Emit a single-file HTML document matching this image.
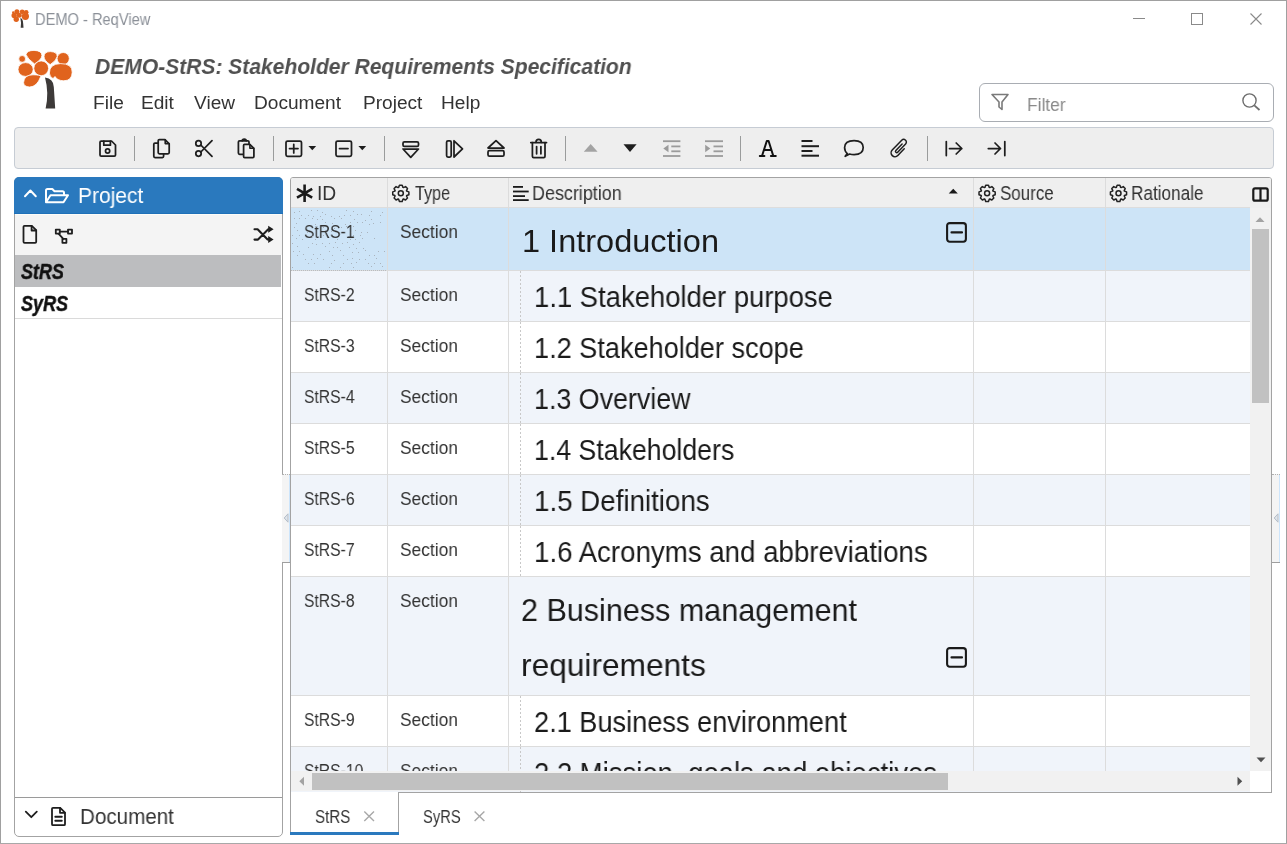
<!DOCTYPE html>
<html><head><meta charset="utf-8">
<style>
*{box-sizing:border-box;margin:0;padding:0}
html,body{width:1287px;height:844px;overflow:hidden;background:#fff;font-family:"Liberation Sans",sans-serif;color:#222}
.a{position:absolute}
.t{position:absolute;white-space:nowrap;line-height:1;transform-origin:0 0;will-change:transform}
svg{position:absolute;overflow:visible}
.ln{position:absolute;background:#dcdcdc}
</style></head><body>
<!-- window frame -->
<div class="a" style="left:0;top:0;width:1287px;height:1px;background:#a0a0a0"></div>
<div class="a" style="left:0;top:0;width:1px;height:844px;background:#a0a0a0"></div>
<div class="a" style="left:1286px;top:0;width:1px;height:844px;background:#a0a0a0"></div>
<div class="a" style="left:0;top:843px;width:1287px;height:1px;background:#a8a8a8"></div>

<!-- TITLEBAR -->
<svg style="left:10px;top:8px" width="22" height="22" viewBox="0 0 70 70">
 <g fill="#e0631d">
  <circle cx="10.4" cy="14.1" r="4"/><circle cx="22" cy="11.6" r="8"/><circle cx="38.6" cy="12" r="7.5"/><circle cx="51.4" cy="13.7" r="7.5"/>
  <circle cx="13.3" cy="24" r="8.5"/><circle cx="29.4" cy="23.2" r="8"/><circle cx="48.9" cy="26.5" r="11.5"/><circle cx="19.9" cy="35.7" r="8.5"/>
 </g>
 <path d="M33 32 Q41 33 42 50 L43 63 L34 63 Q37 50 33 32Z" fill="#3b3938"/>
</svg>
<div class="t" style="left:35px;top:11.6px;font-size:15.8px;color:#8b9098;transform:scaleX(.927)">DEMO - ReqView</div>
<div class="a" style="left:1133px;top:18px;width:12px;height:1px;background:#8a8a8a"></div>
<div class="a" style="left:1191px;top:13px;width:12px;height:12px;border:1px solid #8a8a8a"></div>
<svg style="left:1250px;top:13px" width="12" height="12" viewBox="0 0 12 12"><path d="M0.5 0.5L11.5 11.5M11.5 0.5L0.5 11.5" stroke="#8a8a8a" stroke-width="1.1"/></svg>

<!-- APP HEADER -->
<svg style="left:12px;top:45px" width="70" height="70" viewBox="0 0 70 70">
 <path d="M33 32.5 Q41.5 33.5 41.8 42 L43.2 63.5 L33.6 63.5 Q37.2 48 33 32.5Z" fill="#3d3a39"/>
 <g fill="#e0631d" stroke="#fff" stroke-width="0.8">
  <circle cx="10.15" cy="13.9" r="3.4"/>
  <path d="M14 9.5Q15 5.4 22 5.4Q29.9 5.6 29.9 10.5Q29.5 15 22.5 18.9Q15.5 14 14 9.5Z"/>
  <path d="M32 11.5Q32.2 6.6 38.5 6.6Q45.2 6.8 45.2 11.5Q44.5 15.5 38.2 19.6Q32 15.5 32 11.5Z"/>
  <circle cx="51.2" cy="13.6" r="6.1"/>
  <ellipse cx="13.6" cy="24.5" rx="7.6" ry="6.9"/>
  <circle cx="29.2" cy="23.3" r="7.4"/>
  <path d="M37.4 28Q37.4 19 48.5 18.6Q60.2 18.6 60.2 27.2Q60.1 35.8 51.5 35.8Q45 35.4 43 31.5L41 33.6Q37.4 31.5 37.4 28Z"/>
  <path d="M11.6 37.5Q12 29.9 21 29.8Q28.7 29.8 28.7 31.5Q25 42 17.5 42Q11.5 41.6 11.6 37.5Z"/>
 </g>
</svg>
<div class="t" style="left:94.5px;top:55px;font-size:22.8px;font-weight:bold;font-style:italic;color:#505050;transform:scaleX(.923)">DEMO-StRS: Stakeholder Requirements Specification</div>
<div class="t" style="left:92.5px;top:92.8px;font-size:19.1px;color:#333">File</div>
<div class="t" style="left:141px;top:92.8px;font-size:19.1px;color:#333">Edit</div>
<div class="t" style="left:194px;top:92.8px;font-size:19.1px;color:#333">View</div>
<div class="t" style="left:254px;top:92.8px;font-size:19.1px;color:#333">Document</div>
<div class="t" style="left:362.7px;top:92.8px;font-size:19.1px;color:#333">Project</div>
<div class="t" style="left:441.4px;top:92.8px;font-size:19.1px;color:#333">Help</div>

<!-- FILTER -->
<div class="a" style="left:979px;top:83px;width:295px;height:39px;border:1px solid #a9adb3;border-radius:6px;background:#fff"></div>
<svg style="left:991px;top:93px" width="18" height="18" viewBox="0 0 18 18"><path d="M1 1.5H17L11 9V16.5L8 14V9Z" fill="none" stroke="#7a7a7a" stroke-width="1.6" stroke-linejoin="round"/></svg>
<div class="t" style="left:1026.8px;top:95.5px;font-size:18.8px;color:#8a8a8a;transform:scaleX(.925)">Filter</div>
<svg style="left:1240px;top:91px" width="22" height="22" viewBox="0 0 22 22"><circle cx="9.5" cy="9.5" r="6.6" fill="none" stroke="#6e6e6e" stroke-width="1.4"/><path d="M14.3 14.3L19.5 19" stroke="#6e6e6e" stroke-width="1.8"/></svg>

<!-- TOOLBAR -->
<div class="a" style="left:14px;top:127px;width:1260px;height:42px;background:#eeeeee;border:1px solid #c6ccd4;border-radius:4px"></div>
<div class="a" style="left:134px;top:136px;width:1px;height:25px;background:#9a9c9c"></div>
<div class="a" style="left:273px;top:136px;width:1px;height:25px;background:#9a9c9c"></div>
<div class="a" style="left:384px;top:136px;width:1px;height:25px;background:#9a9c9c"></div>
<div class="a" style="left:565px;top:136px;width:1px;height:25px;background:#9a9c9c"></div>
<div class="a" style="left:740px;top:136px;width:1px;height:25px;background:#9a9c9c"></div>
<div class="a" style="left:927px;top:136px;width:1px;height:25px;background:#9a9c9c"></div>
<svg style="left:0;top:0" width="1287" height="844" viewBox="0 0 1287 844">
<g fill="none" stroke="#1e1e1e" stroke-width="1.75" stroke-linejoin="round" stroke-linecap="round">
 <!-- save -->
 <path d="M100 142.2Q100 141 101.2 141H111.5L115.5 145V155Q115.5 156.2 114.3 156.2H101.2Q100 156.2 100 155Z"/>
 <path d="M103.8 141.2V145.2H110.4V141.2"/>
 <circle cx="107.6" cy="151" r="2.1"/>
 <!-- copy -->
 <path d="M157.8 143H155Q153.8 143 153.8 144.2V156.3Q153.8 157.5 155 157.5H162.4Q163.6 157.5 163.6 156.3V154.2"/>
 <path d="M158.2 140.7Q158.2 139.6 159.3 139.6H165L169.2 143.8V152.6Q169.2 153.8 168 153.8H159.4Q158.2 153.8 158.2 152.6Z"/>
 <path d="M165.2 139.8V143.6H169" stroke-width="1.6"/>
 <!-- scissors -->
 <circle cx="198.5" cy="143.4" r="2.7"/>
 <circle cx="198.5" cy="153.6" r="2.7"/>
 <path d="M200.8 145L212 156.3M200.8 152L212 140.7"/>
 <!-- paste -->
 <path d="M242.8 154.3H239.6Q238.4 154.3 238.4 153.1V141.9Q238.4 140.8 239.6 140.8H247.8Q249 140.8 249 141.9V144"/>
 <path d="M242.2 140.8Q242.2 139 244.3 139Q246.2 139 246.2 140.8"/>
 <path d="M243.6 145.3Q243.6 144.3 244.6 144.3H249.8L253.9 148.4V156.4Q253.9 157.5 252.8 157.5H244.7Q243.6 157.5 243.6 156.4Z"/>
 <path d="M249.9 144.5V148.3H253.7" stroke-width="1.6"/>
 <!-- plus box -->
 <rect x="286" y="141" width="15.5" height="15.3" rx="1.6"/>
 <path d="M289.5 148.6H298M293.75 144.4V152.9"/>
 <!-- minus box -->
 <rect x="336" y="141" width="15.5" height="15.3" rx="1.6"/>
 <path d="M339.5 148.6H348"/>
 <!-- insert below -->
 <rect x="403" y="141.8" width="15.5" height="4.6" rx="1.4"/>
 <path d="M403 149H418.5L410.75 157.3Z"/>
 <!-- insert child -->
 <rect x="446.6" y="140.8" width="4.6" height="16.2" rx="1.4"/>
 <path d="M454 140.8V157L462.5 148.9Z"/>
 <!-- insert above -->
 <path d="M488 148H504L496 140.6Z"/>
 <rect x="488" y="150.6" width="16" height="5.6" rx="1.4"/>
 <!-- trash -->
 <path d="M530.8 142.5H546.5"/>
 <path d="M536 142.3Q536 139.4 538.7 139.4Q541.3 139.4 541.3 142.3"/>
 <path d="M532.4 142.5V156.2Q532.4 157.5 533.7 157.5H543.7Q545 157.5 545 156.2V142.5"/>
 <path d="M536.6 146.5V153.8M540.9 146.5V153.8"/>
 <!-- comment -->
 <path d="M847.3 153.6Q844.6 151.4 844.6 147.6Q844.6 140.6 854.1 140.6Q863.2 140.6 863.2 147.6Q863.2 154.7 854.1 154.7Q851.6 154.7 849.6 154L845.2 156.3Z" stroke-width="1.7"/>
 <!-- paperclip -->
 <g transform="translate(899.35,148.3) rotate(44)"><path d="M3.9 -3V6.25A3.9 3.9 0 0 1 -3.9 6.25V-7.45A2.7 2.7 0 0 1 1.5 -7.45V4A1.25 1.25 0 0 1 -1 4V-5" stroke-width="1.5"/></g>
 <!-- arrows -->
 <path d="M946.3 141.5V155.5M949.5 148.5H961.8M956.2 143L961.8 148.5L956.2 154"/>
 <path d="M1004.8 141.5V155.5M988.3 148.5H1000.5M995 143L1000.5 148.5L995 154"/>
</g>
<g fill="#1e1e1e">
 <path d="M308.4 146H316.2L312.3 150.2Z"/>
 <path d="M358.4 146H366.2L362.3 150.2Z"/>
 <path d="M623.5 144.2H636.6L630 152Z"/>
</g>
<path d="M583.8 151.7H597.6L590.7 144Z" fill="#a3a3a3"/>
<g fill="#9b9b9b">
 <rect x="663" y="140.3" width="17.4" height="1.8"/><rect x="671.3" y="145.5" width="9.1" height="1.8"/><rect x="671.3" y="150.4" width="9.1" height="1.8"/><rect x="663" y="155.1" width="17.4" height="1.8"/>
 <path d="M663.3 148.5L668.5 144.8V152.2Z"/>
 <rect x="705" y="140.3" width="18" height="1.8"/><rect x="713.5" y="145.5" width="9.5" height="1.8"/><rect x="713.5" y="150.4" width="9.5" height="1.8"/><rect x="705" y="155.1" width="18" height="1.8"/>
 <path d="M710.3 148.5L705.2 144.8V152.2Z"/>
</g>
<g fill="#1e1e1e">
 <rect x="801.5" y="140" width="11" height="2"/><rect x="801.5" y="145.2" width="17.5" height="2"/><rect x="801.5" y="150" width="11" height="2"/><rect x="801.5" y="154.7" width="17.5" height="2"/>
</g>
</svg>
<svg style="left:0;top:0" width="1287" height="844" viewBox="0 0 1287 844"><g fill="none" stroke="#111" stroke-width="2" stroke-linecap="round" stroke-linejoin="round"><path d="M762 156L766.8 141H768.6L773.3 156M764.8 149.9H770.6M759.8 156.1H764.4M770.9 156.1H775.8"/></g></svg>


<!-- LEFT PANEL -->
<div class="a" style="left:14px;top:177px;width:269px;height:660px;border:1px solid #a3a3a3;border-radius:5px;background:#fff;overflow:hidden">
  <div class="a" style="left:-1px;top:36px;width:268px;height:41px;background:#f4f4f4;border-top:1px solid #fcfcf8"></div>
  <div class="a" style="left:-1px;top:77px;width:267px;height:32px;background:#bcbdbf"></div>
  <div class="a" style="left:-1px;top:140px;width:268px;height:1px;background:#dadada"></div>
  <div class="a" style="left:-1px;top:619px;width:268px;height:1px;background:#9a9a9a"></div>
</div>
<div class="a" style="left:14px;top:177px;width:269px;height:37px;background:#2a79be;border-bottom:1px solid #1f70b8;border-radius:5px 5px 0 0"></div>
<svg style="left:0;top:0" width="1287" height="844" viewBox="0 0 1287 844">
 <g fill="none" stroke="#fff" stroke-width="2" stroke-linecap="round" stroke-linejoin="round">
  <path d="M25 196.3L30.4 190.5L35.8 196.3"/>
  <path d="M46 201.5V190.5Q46 189 47.5 189H52.3L54.5 191.3H62.5Q64 191.3 64 192.8V195"/>
  <path d="M46 202.2L50.5 195.3H68L63.5 202.2Z"/>
 </g>
 <g fill="none" stroke="#1e1e1e" stroke-width="1.8" stroke-linejoin="round" stroke-linecap="round">
  <path d="M23.5 226.8Q23.5 225.8 24.5 225.8H31.8L36.2 230.2V241.8Q36.2 242.9 35.1 242.9H24.6Q23.5 242.9 23.5 241.8Z"/>
  <path d="M31.6 226V230.5H36"/>
  <rect x="55.8" y="229.6" width="4" height="4"/>
  <rect x="68" y="229.6" width="4" height="4"/>
  <rect x="62.4" y="238.8" width="4" height="4"/>
  <path d="M59.8 231.6H68M58.5 233.6L63.3 238.8"/>
  <path d="M254.5 229.3H257.6L267.6 239.4H269.5M254.5 239.6H258L268 229.4H269.5" stroke-width="2.1"/>
  <path d="M253.5 251 M25.8 811.7L31.3 817.2L36.8 811.7"/>
  <path d="M52 808.8Q52 807.8 53 807.8H60.2L65 812.6V824.2Q65 825.2 64 825.2H53Q52 825.2 52 824.2Z"/>
  <path d="M60 808V812.8H64.8"/>
  <path d="M55.3 816.7H61.8M55.3 820.7H61.8" stroke-width="1.9"/>
 </g>
 <g fill="#1e1e1e">
  <path d="M268.2 225.8L273.6 229.3L268.2 232.8Z"/>
  <path d="M268.2 236L273.6 239.5L268.2 243Z"/>
 </g>
</svg>
<div class="t" style="left:78px;top:185.1px;font-size:22px;color:#fff;transform:scaleX(.955)">Project</div>
<div class="t" style="left:21px;top:261.2px;font-size:21.8px;font-weight:bold;font-style:italic;color:#111;-webkit-text-stroke:.45px #111;transform:scaleX(.825)">StRS</div>
<div class="t" style="left:21px;top:293.1px;font-size:21.8px;font-weight:bold;font-style:italic;color:#111;-webkit-text-stroke:.45px #111;transform:scaleX(.825)">SyRS</div>
<div class="t" style="left:79.5px;top:805.6px;font-size:21.7px;color:#333;transform:scaleX(.95)">Document</div>


<!-- TABLE -->
<div class="a" style="left:290px;top:177px;width:982px;height:616px;border:1px solid #a3a3a3;border-radius:3px 3px 0 0;background:#fff;overflow:hidden">
<div class="a" style="left:0;top:0;width:980px;height:614px;overflow:hidden">
<div class="a" style="left:0;top:0;width:980px;height:30px;background:#efefef"></div>
<div class="a" style="left:0;top:29px;width:959px;height:1px;background:#dddddd"></div>
<div class="a" style="left:0;top:30px;width:959px;height:62px;background:#cde4f7"></div>
<div class="a" style="left:0;top:92px;width:959px;height:1px;background:#dcdcdc"></div>
<div class="t" style="left:13px;top:44.9px;font-size:18.9px;color:#333;transform:scaleX(.83)">StRS-1</div>
<div class="t" style="left:109px;top:44.9px;font-size:18.9px;color:#333;transform:scaleX(.92)">Section</div>
<div class="t" style="left:231.10000000000002px;top:46.6px;font-size:32px;color:#1a1a1a;transform:scaleX(1.016)">1 Introduction</div>
<svg style="left:655px;top:43.599999999999994px" width="21" height="21" viewBox="0 0 21 21"><rect x="1.1" y="1.1" width="18.8" height="18.6" rx="2.6" fill="none" stroke="#1a1a1a" stroke-width="2.1"/><path d="M5.5 10.4H16" stroke="#1a1a1a" stroke-width="2.1" stroke-linecap="round"/></svg>
<div class="a" style="left:0;top:93px;width:959px;height:50px;background:#f0f4fa"></div>
<div class="a" style="left:0;top:143px;width:959px;height:1px;background:#dcdcdc"></div>
<div class="t" style="left:13px;top:107.9px;font-size:18.9px;color:#333;transform:scaleX(.83)">StRS-2</div>
<div class="t" style="left:109px;top:107.9px;font-size:18.9px;color:#333;transform:scaleX(.92)">Section</div>
<div class="t" style="left:242.5px;top:105.1px;font-size:29px;color:#1a1a1a;transform:scaleX(0.946)">1.1 Stakeholder purpose</div>
<div class="a" style="left:229px;top:93px;width:1px;height:50px;background:repeating-linear-gradient(#c8c8c8 0 2px,transparent 2px 4px)"></div>
<div class="a" style="left:0;top:144px;width:959px;height:50px;background:#ffffff"></div>
<div class="a" style="left:0;top:194px;width:959px;height:1px;background:#dcdcdc"></div>
<div class="t" style="left:13px;top:158.9px;font-size:18.9px;color:#333;transform:scaleX(.83)">StRS-3</div>
<div class="t" style="left:109px;top:158.9px;font-size:18.9px;color:#333;transform:scaleX(.92)">Section</div>
<div class="t" style="left:242.5px;top:156.1px;font-size:29px;color:#1a1a1a;transform:scaleX(0.935)">1.2 Stakeholder scope</div>
<div class="a" style="left:229px;top:144px;width:1px;height:50px;background:repeating-linear-gradient(#c8c8c8 0 2px,transparent 2px 4px)"></div>
<div class="a" style="left:0;top:195px;width:959px;height:50px;background:#f0f4fa"></div>
<div class="a" style="left:0;top:245px;width:959px;height:1px;background:#dcdcdc"></div>
<div class="t" style="left:13px;top:209.9px;font-size:18.9px;color:#333;transform:scaleX(.83)">StRS-4</div>
<div class="t" style="left:109px;top:209.9px;font-size:18.9px;color:#333;transform:scaleX(.92)">Section</div>
<div class="t" style="left:242.5px;top:207.1px;font-size:29px;color:#1a1a1a;transform:scaleX(0.925)">1.3 Overview</div>
<div class="a" style="left:229px;top:195px;width:1px;height:50px;background:repeating-linear-gradient(#c8c8c8 0 2px,transparent 2px 4px)"></div>
<div class="a" style="left:0;top:246px;width:959px;height:50px;background:#ffffff"></div>
<div class="a" style="left:0;top:296px;width:959px;height:1px;background:#dcdcdc"></div>
<div class="t" style="left:13px;top:260.9px;font-size:18.9px;color:#333;transform:scaleX(.83)">StRS-5</div>
<div class="t" style="left:109px;top:260.9px;font-size:18.9px;color:#333;transform:scaleX(.92)">Section</div>
<div class="t" style="left:242.5px;top:258.1px;font-size:29px;color:#1a1a1a;transform:scaleX(0.92)">1.4 Stakeholders</div>
<div class="a" style="left:229px;top:246px;width:1px;height:50px;background:repeating-linear-gradient(#c8c8c8 0 2px,transparent 2px 4px)"></div>
<div class="a" style="left:0;top:297px;width:959px;height:50px;background:#f0f4fa"></div>
<div class="a" style="left:0;top:347px;width:959px;height:1px;background:#dcdcdc"></div>
<div class="t" style="left:13px;top:311.9px;font-size:18.9px;color:#333;transform:scaleX(.83)">StRS-6</div>
<div class="t" style="left:109px;top:311.9px;font-size:18.9px;color:#333;transform:scaleX(.92)">Section</div>
<div class="t" style="left:242.5px;top:309.1px;font-size:29px;color:#1a1a1a;transform:scaleX(0.956)">1.5 Definitions</div>
<div class="a" style="left:229px;top:297px;width:1px;height:50px;background:repeating-linear-gradient(#c8c8c8 0 2px,transparent 2px 4px)"></div>
<div class="a" style="left:0;top:348px;width:959px;height:50px;background:#ffffff"></div>
<div class="a" style="left:0;top:398px;width:959px;height:1px;background:#dcdcdc"></div>
<div class="t" style="left:13px;top:362.9px;font-size:18.9px;color:#333;transform:scaleX(.83)">StRS-7</div>
<div class="t" style="left:109px;top:362.9px;font-size:18.9px;color:#333;transform:scaleX(.92)">Section</div>
<div class="t" style="left:242.5px;top:360.1px;font-size:29px;color:#1a1a1a;transform:scaleX(0.954)">1.6 Acronyms and abbreviations</div>
<div class="a" style="left:229px;top:348px;width:1px;height:50px;background:repeating-linear-gradient(#c8c8c8 0 2px,transparent 2px 4px)"></div>
<div class="a" style="left:0;top:399px;width:959px;height:118px;background:#f0f4fa"></div>
<div class="a" style="left:0;top:517px;width:959px;height:1px;background:#dcdcdc"></div>
<div class="t" style="left:13px;top:413.9px;font-size:18.9px;color:#333;transform:scaleX(.83)">StRS-8</div>
<div class="t" style="left:109px;top:413.9px;font-size:18.9px;color:#333;transform:scaleX(.92)">Section</div>
<div class="t" style="left:229.60000000000002px;top:415.6px;font-size:32px;color:#1a1a1a;transform:scaleX(0.954)">2 Business management</div>
<div class="t" style="left:229.60000000000002px;top:471.0px;font-size:32px;color:#1a1a1a;transform:scaleX(0.99)">requirements</div>
<svg style="left:655px;top:469px" width="21" height="21" viewBox="0 0 21 21"><rect x="1.1" y="1.1" width="18.8" height="18.6" rx="2.6" fill="none" stroke="#1a1a1a" stroke-width="2.1"/><path d="M5.5 10.4H16" stroke="#1a1a1a" stroke-width="2.1" stroke-linecap="round"/></svg>
<div class="a" style="left:0;top:518px;width:959px;height:50px;background:#ffffff"></div>
<div class="a" style="left:0;top:568px;width:959px;height:1px;background:#dcdcdc"></div>
<div class="t" style="left:13px;top:532.9px;font-size:18.9px;color:#333;transform:scaleX(.83)">StRS-9</div>
<div class="t" style="left:109px;top:532.9px;font-size:18.9px;color:#333;transform:scaleX(.92)">Section</div>
<div class="t" style="left:242.5px;top:530.1px;font-size:29px;color:#1a1a1a;transform:scaleX(0.937)">2.1 Business environment</div>
<div class="a" style="left:229px;top:518px;width:1px;height:50px;background:repeating-linear-gradient(#c8c8c8 0 2px,transparent 2px 4px)"></div>
<div class="a" style="left:0;top:569px;width:959px;height:53px;background:#f0f4fa"></div>
<div class="a" style="left:0;top:622px;width:959px;height:1px;background:#dcdcdc"></div>
<div class="t" style="left:13px;top:583.9px;font-size:18.9px;color:#333;transform:scaleX(.83)">StRS-10</div>
<div class="t" style="left:109px;top:583.9px;font-size:18.9px;color:#333;transform:scaleX(.92)">Section</div>
<div class="t" style="left:242.5px;top:581.1px;font-size:29px;color:#1a1a1a;transform:scaleX(0.947)">2.2 Mission, goals and objectives</div>
<div class="a" style="left:229px;top:569px;width:1px;height:53px;background:repeating-linear-gradient(#c8c8c8 0 2px,transparent 2px 4px)"></div>
<svg style="left:-291px;top:-178px" width="1287" height="844" viewBox="0 0 1287 844"><g fill="#aab4be"><rect x="294" y="212" width="1" height="1"/><rect x="299" y="211" width="1" height="1"/><rect x="311" y="210" width="1" height="1"/><rect x="317" y="210" width="1" height="1"/><rect x="322" y="212" width="1" height="1"/><rect x="346" y="210" width="1" height="1"/><rect x="353" y="211" width="1" height="1"/><rect x="371" y="211" width="1" height="1"/><rect x="382" y="212" width="1" height="1"/><rect x="301" y="215" width="1" height="1"/><rect x="308" y="215" width="1" height="1"/><rect x="313" y="216" width="1" height="1"/><rect x="320" y="216" width="1" height="1"/><rect x="325" y="214" width="1" height="1"/><rect x="331" y="216" width="1" height="1"/><rect x="339" y="216" width="1" height="1"/><rect x="344" y="215" width="1" height="1"/><rect x="350" y="215" width="1" height="1"/><rect x="357" y="214" width="1" height="1"/><rect x="361" y="214" width="1" height="1"/><rect x="369" y="215" width="1" height="1"/><rect x="380" y="215" width="1" height="1"/><rect x="294" y="218" width="1" height="1"/><rect x="299" y="218" width="1" height="1"/><rect x="305" y="218" width="1" height="1"/><rect x="312" y="218" width="1" height="1"/><rect x="317" y="219" width="1" height="1"/><rect x="322" y="219" width="1" height="1"/><rect x="334" y="218" width="1" height="1"/><rect x="341" y="218" width="1" height="1"/><rect x="354" y="219" width="1" height="1"/><rect x="365" y="220" width="1" height="1"/><rect x="371" y="219" width="1" height="1"/><rect x="296" y="223" width="1" height="1"/><rect x="315" y="224" width="1" height="1"/><rect x="325" y="222" width="1" height="1"/><rect x="332" y="223" width="1" height="1"/><rect x="345" y="224" width="1" height="1"/><rect x="350" y="222" width="1" height="1"/><rect x="357" y="222" width="1" height="1"/><rect x="362" y="222" width="1" height="1"/><rect x="369" y="224" width="1" height="1"/><rect x="373" y="223" width="1" height="1"/><rect x="380" y="222" width="1" height="1"/><rect x="294" y="227" width="1" height="1"/><rect x="316" y="226" width="1" height="1"/><rect x="323" y="227" width="1" height="1"/><rect x="334" y="228" width="1" height="1"/><rect x="341" y="227" width="1" height="1"/><rect x="346" y="226" width="1" height="1"/><rect x="353" y="226" width="1" height="1"/><rect x="297" y="230" width="1" height="1"/><rect x="307" y="232" width="1" height="1"/><rect x="325" y="230" width="1" height="1"/><rect x="331" y="231" width="1" height="1"/><rect x="351" y="232" width="1" height="1"/><rect x="355" y="230" width="1" height="1"/><rect x="361" y="232" width="1" height="1"/><rect x="367" y="232" width="1" height="1"/><rect x="292" y="235" width="1" height="1"/><rect x="299" y="235" width="1" height="1"/><rect x="312" y="236" width="1" height="1"/><rect x="323" y="235" width="1" height="1"/><rect x="347" y="236" width="1" height="1"/><rect x="353" y="235" width="1" height="1"/><rect x="360" y="235" width="1" height="1"/><rect x="296" y="238" width="1" height="1"/><rect x="302" y="239" width="1" height="1"/><rect x="315" y="239" width="1" height="1"/><rect x="337" y="239" width="1" height="1"/><rect x="350" y="239" width="1" height="1"/><rect x="355" y="239" width="1" height="1"/><rect x="362" y="238" width="1" height="1"/><rect x="374" y="238" width="1" height="1"/><rect x="292" y="243" width="1" height="1"/><rect x="312" y="243" width="1" height="1"/><rect x="316" y="244" width="1" height="1"/><rect x="322" y="243" width="1" height="1"/><rect x="329" y="243" width="1" height="1"/><rect x="335" y="242" width="1" height="1"/><rect x="342" y="243" width="1" height="1"/><rect x="347" y="242" width="1" height="1"/><rect x="353" y="244" width="1" height="1"/><rect x="359" y="242" width="1" height="1"/><rect x="297" y="246" width="1" height="1"/><rect x="308" y="247" width="1" height="1"/><rect x="325" y="246" width="1" height="1"/><rect x="333" y="247" width="1" height="1"/><rect x="337" y="247" width="1" height="1"/><rect x="349" y="247" width="1" height="1"/><rect x="356" y="248" width="1" height="1"/><rect x="363" y="248" width="1" height="1"/><rect x="293" y="251" width="1" height="1"/><rect x="299" y="251" width="1" height="1"/><rect x="329" y="251" width="1" height="1"/><rect x="340" y="250" width="1" height="1"/><rect x="352" y="252" width="1" height="1"/><rect x="358" y="252" width="1" height="1"/><rect x="365" y="250" width="1" height="1"/><rect x="378" y="251" width="1" height="1"/><rect x="384" y="251" width="1" height="1"/><rect x="297" y="255" width="1" height="1"/><rect x="303" y="254" width="1" height="1"/><rect x="313" y="254" width="1" height="1"/><rect x="320" y="254" width="1" height="1"/><rect x="332" y="255" width="1" height="1"/><rect x="343" y="255" width="1" height="1"/><rect x="369" y="255" width="1" height="1"/><rect x="374" y="255" width="1" height="1"/><rect x="305" y="259" width="1" height="1"/><rect x="311" y="259" width="1" height="1"/><rect x="317" y="258" width="1" height="1"/><rect x="323" y="259" width="1" height="1"/><rect x="334" y="260" width="1" height="1"/><rect x="347" y="259" width="1" height="1"/><rect x="352" y="258" width="1" height="1"/><rect x="359" y="259" width="1" height="1"/><rect x="365" y="259" width="1" height="1"/><rect x="376" y="258" width="1" height="1"/><rect x="308" y="263" width="1" height="1"/><rect x="314" y="263" width="1" height="1"/><rect x="331" y="263" width="1" height="1"/><rect x="343" y="263" width="1" height="1"/><rect x="351" y="263" width="1" height="1"/><rect x="356" y="262" width="1" height="1"/><rect x="368" y="263" width="1" height="1"/><rect x="374" y="263" width="1" height="1"/><rect x="380" y="263" width="1" height="1"/><rect x="292" y="267" width="1" height="1"/><rect x="329" y="267" width="1" height="1"/><rect x="340" y="267" width="1" height="1"/><rect x="353" y="267" width="1" height="1"/><rect x="371" y="266" width="1" height="1"/><rect x="382" y="266" width="1" height="1"/></g><path d="M291 270.5H386" stroke="#b8bcc0" stroke-width="1" stroke-dasharray="1 1"/></svg>
<div class="a" style="left:96px;top:0;width:1px;height:594px;background:#dcdcdc"></div>
<div class="a" style="left:217px;top:0;width:1px;height:594px;background:#dcdcdc"></div>
<div class="a" style="left:682px;top:0;width:1px;height:594px;background:#dcdcdc"></div>
<div class="a" style="left:814px;top:0;width:1px;height:594px;background:#dcdcdc"></div>
<div class="t" style="left:25.69999999999999px;top:5.9px;font-size:19.3px;color:#333;transform:scaleX(1.0)">ID</div>
<div class="t" style="left:124.19999999999999px;top:5.9px;font-size:19.3px;color:#333;transform:scaleX(0.84)">Type</div>
<div class="t" style="left:240.60000000000002px;top:5.9px;font-size:19.3px;color:#333;transform:scaleX(0.93)">Description</div>
<div class="t" style="left:708.9px;top:5.9px;font-size:19.3px;color:#333;transform:scaleX(0.88)">Source</div>
<div class="t" style="left:840.2px;top:5.9px;font-size:19.3px;color:#333;transform:scaleX(0.89)">Rationale</div>
<svg style="left:-291px;top:-178px" width="1287" height="844" viewBox="0 0 1287 844">
 <g stroke="#1a1a1a" stroke-width="2.6" stroke-linecap="butt">
  <path d="M304.6 184.6V202M297 188.9L312.2 197.7M297 197.7L312.2 188.9"/>
 </g>
 <g fill="none" stroke="#222" stroke-width="1.5">
  <path transform="translate(400.8,193.3)" d="M5.92 -2.16 L8.08 -1.39 L8.08 1.39 L5.92 2.16 L5.71 2.66 L6.70 4.73 L4.73 6.70 L2.66 5.71 L2.16 5.92 L1.39 8.08 L-1.39 8.08 L-2.16 5.92 L-2.66 5.71 L-4.73 6.70 L-6.70 4.73 L-5.71 2.66 L-5.92 2.16 L-8.08 1.39 L-8.08 -1.39 L-5.92 -2.16 L-5.71 -2.66 L-6.70 -4.73 L-4.73 -6.70 L-2.66 -5.71 L-2.16 -5.92 L-1.39 -8.08 L1.39 -8.08 L2.16 -5.92 L2.66 -5.71 L4.73 -6.70 L6.70 -4.73 L5.71 -2.66Z" stroke-linejoin="round"/><circle cx="400.8" cy="193.3" r="2.5"/>
  <path transform="translate(987.1,193.3)" d="M5.92 -2.16 L8.08 -1.39 L8.08 1.39 L5.92 2.16 L5.71 2.66 L6.70 4.73 L4.73 6.70 L2.66 5.71 L2.16 5.92 L1.39 8.08 L-1.39 8.08 L-2.16 5.92 L-2.66 5.71 L-4.73 6.70 L-6.70 4.73 L-5.71 2.66 L-5.92 2.16 L-8.08 1.39 L-8.08 -1.39 L-5.92 -2.16 L-5.71 -2.66 L-6.70 -4.73 L-4.73 -6.70 L-2.66 -5.71 L-2.16 -5.92 L-1.39 -8.08 L1.39 -8.08 L2.16 -5.92 L2.66 -5.71 L4.73 -6.70 L6.70 -4.73 L5.71 -2.66Z" stroke-linejoin="round"/><circle cx="987.1" cy="193.3" r="2.5"/>
  <path transform="translate(1118.5,193.3)" d="M5.92 -2.16 L8.08 -1.39 L8.08 1.39 L5.92 2.16 L5.71 2.66 L6.70 4.73 L4.73 6.70 L2.66 5.71 L2.16 5.92 L1.39 8.08 L-1.39 8.08 L-2.16 5.92 L-2.66 5.71 L-4.73 6.70 L-6.70 4.73 L-5.71 2.66 L-5.92 2.16 L-8.08 1.39 L-8.08 -1.39 L-5.92 -2.16 L-5.71 -2.66 L-6.70 -4.73 L-4.73 -6.70 L-2.66 -5.71 L-2.16 -5.92 L-1.39 -8.08 L1.39 -8.08 L2.16 -5.92 L2.66 -5.71 L4.73 -6.70 L6.70 -4.73 L5.71 -2.66Z" stroke-linejoin="round"/><circle cx="1118.5" cy="193.3" r="2.5"/>
  
 </g>
 <g fill="#1a1a1a">
  <rect x="513" y="186" width="10" height="1.8"/><rect x="513" y="190.6" width="15.7" height="1.8"/><rect x="513" y="195.2" width="12" height="1.8"/><rect x="513" y="199.2" width="15.7" height="1.8"/>
  <path d="M948.7 193.5H957.8L953.25 188.7Z"/>
 </g>
 <g fill="none" stroke="#1a1a1a" stroke-width="2.2">
  <rect x="1253.3" y="188.3" width="14.4" height="12.4" rx="1.8"/><path d="M1260.5 188.5V200.5"/>
 </g>
</svg>
<div class="a" style="left:959px;top:30px;width:21px;height:563px;background:#f1f1f1"></div>
<div class="a" style="left:961px;top:51px;width:17px;height:174px;background:#c1c1c1"></div>
<svg style="left:963px;top:38px" width="13" height="8" viewBox="0 0 13 8"><path d="M1.5 6H10.5L6 1.3Z" fill="#a3a3a3"/></svg>
<svg style="left:963.5px;top:577.8px" width="13" height="8" viewBox="0 0 13 8"><path d="M1.5 1.5H10.5L6 6.2Z" fill="#505050"/></svg>
<div class="a" style="left:0;top:593px;width:959px;height:20px;background:#f1f1f1"></div>
<div class="a" style="left:21px;top:595px;width:636px;height:17px;background:#c1c1c1"></div>
<svg style="left:6.5px;top:597px" width="8" height="13" viewBox="0 0 8 13"><path d="M6 1.8V10.8L1.3 6.3Z" fill="#a3a3a3"/></svg>
<svg style="left:944.8px;top:597px" width="8" height="13" viewBox="0 0 8 13"><path d="M1.5 1.8V10.8L6.2 6.3Z" fill="#505050"/></svg>
<div class="a" style="left:959px;top:593px;width:21px;height:20px;background:#fff"></div>
</div></div>
<!-- TABS -->
<div class="a" style="left:291px;top:792px;width:107px;height:1px;background:#fff"></div>
<div class="a" style="left:290px;top:792px;width:1px;height:43px;background:#a3a3a3"></div>
<div class="a" style="left:398px;top:792px;width:1px;height:40px;background:#a3a3a3"></div>
<div class="a" style="left:398px;top:792px;width:874px;height:1px;background:#a3a3a3"></div>
<div class="a" style="left:290px;top:832px;width:109px;height:3px;background:#2a79be"></div>
<div class="t" style="left:315.4px;top:807.5px;font-size:18px;color:#333;transform:scaleX(.84)">StRS</div>
<div class="t" style="left:423px;top:807.5px;font-size:18px;color:#333;transform:scaleX(.82)">SyRS</div>
<svg style="left:0;top:0" width="1287" height="844" viewBox="0 0 1287 844">
 <path d="M364.3 811.5L374 821M374 811.5L364.3 821M474.6 811.5L484.4 821M484.4 811.5L474.6 821" stroke="#a8a8a8" stroke-width="1.4"/>
</svg>
<!-- splitters -->
<div class="a" style="left:282px;top:474px;width:8px;height:89px;background:#f4f4f4;border-bottom:1px solid #9e9e9e;border-top:1px dotted #b0b0b0"></div>
<div class="a" style="left:289px;top:475px;width:1px;height:87px;background:#cde5fb"></div>
<svg style="left:282px;top:511px" width="8" height="14" viewBox="0 0 8 14"><path d="M6 2.8V11.2L2.2 7Z" fill="#dfe4ea" stroke="#b4bec9" stroke-width="1"/></svg>
<div class="a" style="left:1272px;top:474px;width:8px;height:89px;background:#f4f4f4;border-bottom:1px solid #9e9e9e;border-top:1px dotted #b0b0b0"></div>
<div class="a" style="left:1279px;top:475px;width:1px;height:87px;background:#cde5fb"></div>
<svg style="left:1272px;top:511px" width="8" height="14" viewBox="0 0 8 14"><path d="M6 2.8V11.2L2.2 7Z" fill="#dfe4ea" stroke="#b4bec9" stroke-width="1"/></svg>
</body></html>
